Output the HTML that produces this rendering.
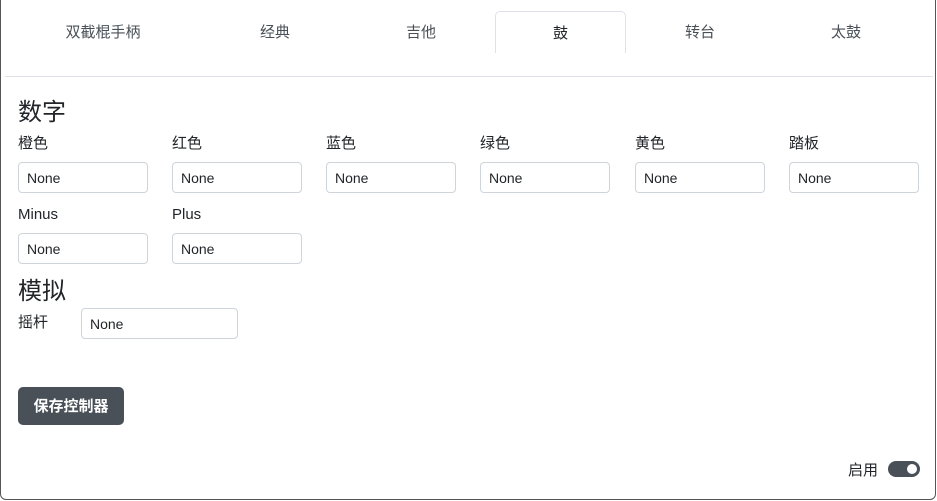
<!DOCTYPE html>
<html><head><meta charset="utf-8"><style>
*{box-sizing:border-box;margin:0;padding:0}
body{width:937px;height:501px;background:#fff;font-family:"Liberation Sans","Noto Sans CJK SC",sans-serif;color:#212529;position:relative;overflow:hidden}
.frame{position:absolute;left:0;top:-10px;width:936px;height:510px;border:1px solid #555;border-radius:6px}
.tab{position:absolute;top:11px;height:42px;line-height:44px;text-align:center;font-size:15px;color:#495057}
.act{border:1px solid #dee2e6;border-bottom:none;border-radius:5px 5px 0 0;color:#212529}
.hr{position:absolute;left:5px;top:76px;width:928px;height:1px;background:#dee2e6}
.h{position:absolute;font-size:24px;color:#212529}
.l{position:absolute;font-size:15px}
.i{position:absolute;width:130px;height:31px;border:1px solid #ced4da;border-radius:4px;font-size:14px;line-height:31px;padding-left:8px}
.btn{position:absolute;left:18px;top:387px;width:106px;height:38px;background:#495057;color:#fff;border-radius:5px;font-size:15px;font-weight:bold;line-height:40px;text-align:center}
.sw{position:absolute;left:888px;top:461px;width:32px;height:16px;border-radius:8px;background:#495057}
.sw::after{content:"";position:absolute;right:3px;top:3px;width:10px;height:10px;border-radius:50%;background:#fff}
</style></head><body>
<div class="frame"></div>
<div class="tab" style="left:30px;width:146px">双截棍手柄</div>
<div class="tab" style="left:200px;width:150px">经典</div>
<div class="tab" style="left:346px;width:150px">吉他</div>
<div class="tab act" style="left:495px;width:131px">鼓</div>
<div class="tab" style="left:625px;width:150px">转台</div>
<div class="tab" style="left:771px;width:150px">太鼓</div>
<div class="hr"></div>
<div class="h" style="left:18px;top:92px">数字</div>
<div class="l" style="left:18px;top:132px">橙色</div>
<div class="l" style="left:172px;top:132px">红色</div>
<div class="l" style="left:326px;top:132px">蓝色</div>
<div class="l" style="left:480px;top:132px">绿色</div>
<div class="l" style="left:635px;top:132px">黄色</div>
<div class="l" style="left:789px;top:132px">踏板</div>
<div class="i" style="left:18px;top:162px">None</div>
<div class="i" style="left:172px;top:162px">None</div>
<div class="i" style="left:326px;top:162px">None</div>
<div class="i" style="left:480px;top:162px">None</div>
<div class="i" style="left:635px;top:162px">None</div>
<div class="i" style="left:789px;top:162px">None</div>
<div class="l" style="left:18px;top:206px">Minus</div>
<div class="l" style="left:172px;top:206px">Plus</div>
<div class="i" style="left:18px;top:233px">None</div>
<div class="i" style="left:172px;top:233px">None</div>
<div class="h" style="left:18px;top:271px">模拟</div>
<div class="l" style="left:18px;top:311px">摇杆</div>
<div class="i" style="left:81px;top:308px;width:157px">None</div>
<div class="btn">保存控制器</div>
<div class="l" style="left:848px;top:459px">启用</div>
<div class="sw"></div>
</body></html>
